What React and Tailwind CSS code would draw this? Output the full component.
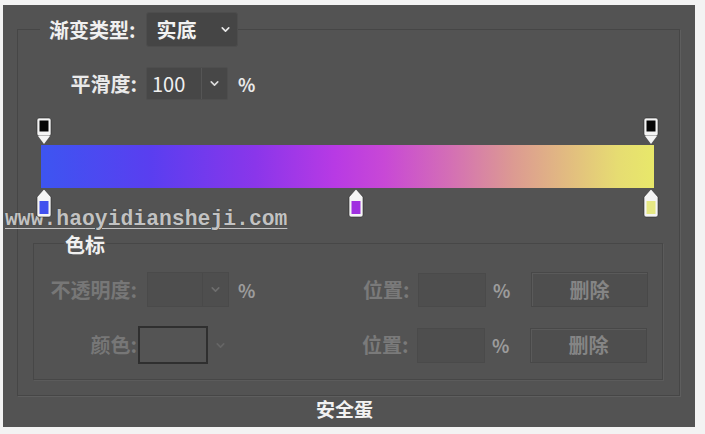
import { ChevronDown } from "lucide-react"

function TopStop({ left }) {
  return (
    <svg className="absolute top-0" style={{ left }} width="16" height="28" viewBox="0 0 16 28">
      <rect x="1" y="1" width="14" height="18" rx="2" fill="#f4f4f4" stroke="#2a2a2a" strokeWidth="0.6" />
      <rect x="3.5" y="3.5" width="9" height="11" fill="#050505" />
      <polygon points="2,19 14,19 8,27" fill="#f4f4f4" />
    </svg>
  )
}

function BottomStop({ left, color }) {
  return (
    <svg className="absolute top-[72px]" style={{ left }} width="16" height="29" viewBox="0 0 16 29">
      <path d="M8 0 L15 8 L15 26 Q15 28 13 28 L3 28 Q1 28 1 26 L1 8 Z" fill="#f4f4f4" stroke="#2a2a2a" strokeWidth="0.6" />
      <rect x="3.5" y="12" width="9" height="13" fill={color} />
    </svg>
  )
}

function Chevron({ className }) {
  return <ChevronDown className={className} size={13} strokeWidth={3} />
}

export default function App() {
  return (
    <div className="w-[705px] h-[434px] bg-[#f3f3f3] pt-[5px] pl-[3px] font-['Noto_Sans_CJK_SC','Noto_Sans',sans-serif]">
      <div className="relative w-[692px] h-[422px] bg-[#535353] pt-[7px] pl-[14px] pr-[15px]">
        <div className="absolute left-[2px] top-[203px] text-[21.4px] leading-[22px] font-bold font-['Liberation_Mono',monospace] text-[#c2c2c2] underline decoration-1 underline-offset-[3px] [text-shadow:0_0_1px_#333]">
          www.haoyidiansheji.com
        </div>

        <fieldset className="border border-[#464646] shadow-[1px_1px_0_#5e5e5e] h-[384px]">
          <legend className="ml-[22px] pl-[9px] flex items-center">
            <span className="text-[20px] leading-[24px] font-bold text-[#f0f0f0]">渐变类型:</span>
            <div className="ml-[10px] w-[92px] h-[35px] bg-[#454545] border border-[#4d4d4d] rounded-[3px] flex items-center pl-[10px] pr-[5px] justify-between">
              <span className="text-[20px] leading-[24px] font-bold text-[#f2f2f2]">实底</span>
              <Chevron className="text-[#e8e8e8]" />
            </div>
          </legend>

          <div className="flex items-center mt-[20px] h-[33px]">
            <span className="w-[119px] text-right text-[20px] leading-[24px] font-bold text-[#eaeaea]">平滑度:</span>
            <div className="ml-[9px] flex h-[33px] bg-[#474747] border border-[#4e4e4e] rounded-[2px]">
              <span className="w-[55px] pl-[5px] text-[20px] leading-[31px] text-[#f0f0f0] border-r border-[#555]">100</span>
              <span className="w-[25px] flex items-center justify-center">
                <Chevron className="text-[#dcdcdc]" />
              </span>
            </div>
            <span className="ml-[10px] text-[18px] leading-[24px] font-bold text-[#eaeaea]">%</span>
          </div>

          <div className="relative ml-[23px] mt-[17px] w-[613px] h-[100px]">
            <TopStop left={-5} />
            <TopStop left={602} />
            <div className="absolute top-[28px] left-0 w-full h-[43px] bg-[linear-gradient(90deg,#3d55f1_0%,#5a3ef0_18%,#8a36ea_35%,#b83ae4_48%,#c848d6_56%,#d470b4_67%,#dc9a92_77%,#e2bc80_86%,#e6dc72_94%,#e8e86a_100%)]" />
            <BottomStop left={-5} color="#4150ee" />
            <BottomStop left={307} color="#a030e0" />
            <BottomStop left={602} color="#e6e884" />
          </div>

          <fieldset className="mt-[14px] ml-[15px] mr-[16px] border border-[#474747] shadow-[1px_1px_0_#5b5b5b] pb-[15px]">
            <legend className="ml-[30px] px-[1px] pt-[4px] text-[20px] leading-[20px] font-bold text-[#f0f0f0]">色标</legend>

            <div className="flex items-center mt-[17px] h-[35px] whitespace-nowrap">
              <span className="shrink-0 w-[103px] text-right text-[20px] leading-[24px] font-bold text-[#777777]">不透明度:</span>
              <div className="shrink-0 ml-[10px] flex h-[35px] bg-[#4e4e4e] border border-[#4a4a4a]">
                <span className="w-[55px] border-r border-[#494949]" />
                <span className="w-[25px] flex items-center justify-center">
                  <Chevron className="text-[#6e6e6e]" />
                </span>
              </div>
              <span className="shrink-0 ml-[9px] w-[16px] text-[18px] leading-[24px] font-bold text-[#9c9c9c]">%</span>
              <span className="shrink-0 ml-[109px] w-[48px] text-[20px] leading-[24px] font-bold text-[#7a7a7a]">位置:</span>
              <div className="shrink-0 ml-[7px] w-[68px] h-[34px] bg-[#4e4e4e] border border-[#4a4a4a]" />
              <span className="shrink-0 ml-[7px] w-[16px] text-[18px] leading-[24px] font-bold text-[#9c9c9c]">%</span>
              <div className="shrink-0 ml-[22px] w-[117px] h-[35px] bg-[#4e4e4e] border border-[#484848] shadow-[inset_1px_1px_0_#5a5a5a] flex items-center justify-center text-[20px] leading-[24px] font-bold text-[#858585]">删除</div>
            </div>

            <div className="flex items-center mt-[19px] h-[38px] whitespace-nowrap">
              <span className="shrink-0 w-[103px] text-right text-[20px] leading-[24px] font-bold text-[#777777]">颜色:</span>
              <div className="shrink-0 ml-[1px] w-[70px] h-[38px] bg-[#545454] border-2 border-[#2f2f2f]" />
              <Chevron className="shrink-0 ml-[6px] text-[#666666]" />
              <span className="shrink-0 ml-[135px] w-[48px] text-[20px] leading-[24px] font-bold text-[#7a7a7a]">位置:</span>
              <div className="shrink-0 ml-[7px] w-[68px] h-[35px] bg-[#4e4e4e] border border-[#4a4a4a]" />
              <span className="shrink-0 ml-[7px] w-[16px] text-[18px] leading-[24px] font-bold text-[#9c9c9c]">%</span>
              <div className="shrink-0 ml-[22px] w-[117px] h-[35px] bg-[#4e4e4e] border border-[#484848] shadow-[inset_1px_1px_0_#5a5a5a] flex items-center justify-center text-[20px] leading-[24px] font-bold text-[#858585]">删除</div>
            </div>
          </fieldset>
        </fieldset>

        <div className="mt-[1px] text-center pr-[8px] text-[19px] leading-[24px] font-bold text-[#f2f2f2]">安全蛋</div>
      </div>
    </div>
  )
}
